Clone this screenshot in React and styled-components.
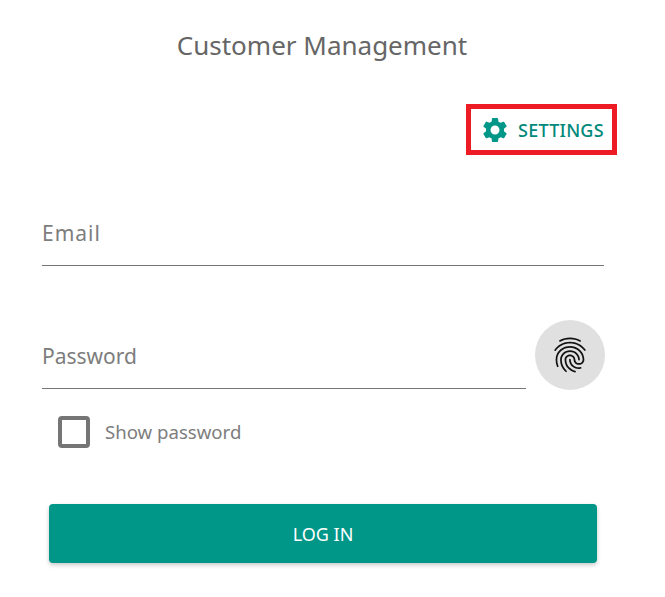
import React from 'react';
import styled, { createGlobalStyle } from 'styled-components';

const GlobalStyle = createGlobalStyle`
    html, body {
        margin:0;
        padding:0;
        background:#fff;
        font-family:"Noto Sans", "Open Sans", sans-serif;
    }
`;

const gearPath = 'M19.14 12.94c.04-.3.06-.61.06-.94 0-.32-.02-.64-.07-.94l2.03-1.58c.18-.14.23-.41.12-.61l-1.92-3.32c-.12-.22-.37-.29-.59-.22l-2.39.96c-.5-.38-1.03-.7-1.62-.94l-.36-2.54c-.04-.24-.24-.41-.48-.41h-3.84c-.24 0-.43.17-.47.41l-.36 2.54c-.59.24-1.13.57-1.62.94l-2.39-.96c-.22-.08-.47 0-.59.22L2.74 8.87c-.12.21-.08.47.12.61l2.03 1.58c-.05.3-.09.63-.09.94s.02.64.07.94l-2.03 1.58c-.18.14-.23.41-.12.61l1.92 3.32c.12.22.37.29.59.22l2.39-.96c.5.38 1.03.7 1.62.94l.36 2.54c.05.24.24.41.48.41h3.84c.24 0 .44-.17.47-.41l.36-2.54c.59-.24 1.13-.56 1.62-.94l2.39.96c.22.08.47 0 .59-.22l1.92-3.32c.12-.22.07-.47-.12-.61l-2.01-1.58zM12 15.6c-1.98 0-3.6-1.62-3.6-3.6s1.62-3.6 3.6-3.6 3.6 1.62 3.6 3.6-1.62 3.6-3.6 3.6z';

const fingerprintPath = 'M17.81 4.47c-.08 0-.16-.02-.23-.06C15.66 3.42 14 3 12.01 3c-1.98 0-3.86.47-5.57 1.41-.24.13-.54.04-.68-.2-.13-.24-.04-.55.2-.68C7.82 2.52 9.86 2 12.01 2c2.13 0 3.99.47 6.03 1.52.25.13.34.43.21.67-.09.18-.26.28-.44.28zM3.5 9.72c-.1 0-.2-.03-.29-.09-.23-.16-.28-.47-.12-.7.99-1.4 2.25-2.5 3.75-3.27C9.98 4.04 14 4.03 17.15 5.65c1.5.77 2.76 1.86 3.75 3.25.16.22.11.54-.12.7-.23.16-.54.11-.7-.12-.9-1.26-2.04-2.25-3.39-2.94-2.87-1.47-6.54-1.47-9.4.01-1.36.7-2.5 1.7-3.4 2.96-.08.14-.23.21-.39.21zm6.25 12.07c-.13 0-.26-.05-.35-.15-.87-.87-1.34-1.43-2.01-2.64-.69-1.23-1.05-2.73-1.05-4.34 0-2.97 2.54-5.39 5.66-5.39s5.66 2.42 5.66 5.39c0 .28-.22.5-.5.5s-.5-.22-.5-.5c0-2.42-2.09-4.39-4.66-4.39-2.57 0-4.66 1.97-4.66 4.39 0 1.44.32 2.77.93 3.85.64 1.15 1.08 1.64 1.85 2.42.19.2.19.51 0 .71-.11.1-.24.15-.37.15zm7.17-1.85c-1.19 0-2.24-.3-3.1-.89-1.49-1.01-2.38-2.65-2.38-4.39 0-.28.22-.5.5-.5s.5.22.5.5c0 1.41.72 2.74 1.94 3.56.71.48 1.54.71 2.54.71.24 0 .64-.03 1.04-.1.27-.05.53.13.58.41.05.27-.13.53-.41.58-.57.11-1.07.12-1.21.12zM14.91 22c-.04 0-.09-.01-.13-.02-1.59-.44-2.63-1.03-3.72-2.1-1.4-1.39-2.17-3.24-2.17-5.22 0-1.62 1.38-2.94 3.08-2.94 1.7 0 3.08 1.32 3.08 2.94 0 1.07.93 1.94 2.08 1.94s2.08-.87 2.08-1.94c0-3.77-3.25-6.83-7.25-6.83-2.84 0-5.44 1.58-6.61 4.03-.39.81-.59 1.76-.59 2.8 0 .78.07 2.01.67 3.61.1.26-.03.55-.29.64-.26.1-.55-.04-.64-.29-.49-1.31-.73-2.61-.73-3.96 0-1.2.23-2.29.68-3.24 1.33-2.79 4.28-4.6 7.51-4.6 4.55 0 8.25 3.51 8.25 7.83 0 1.62-1.38 2.94-3.08 2.94s-3.08-1.32-3.08-2.94c0-1.07-.93-1.94-2.08-1.94s-2.08.87-2.08 1.94c0 1.71.66 3.31 1.87 4.51.95.94 1.86 1.46 3.27 1.85.27.07.42.35.35.61-.05.23-.26.38-.47.38z';

function App() {
    return (
        <Page>
            <GlobalStyle />
            <Title>Customer Management</Title>
            <SettingsRow>
                <SettingsButton>
                    <svg width="30" height="30" viewBox="0 0 24 24" fill="#009688">
                        <path d={gearPath} />
                    </svg>
                    <SettingsText>SETTINGS</SettingsText>
                </SettingsButton>
            </SettingsRow>
            <EmailField>
                <FieldLabel $tracking="1px">Email</FieldLabel>
            </EmailField>
            <PasswordRow>
                <PasswordField>
                    <FieldLabel>Password</FieldLabel>
                </PasswordField>
                <FingerprintButton>
                    <svg width="42" height="42" viewBox="0 0 24 24" fill="#111">
                        <path d={fingerprintPath} />
                    </svg>
                </FingerprintButton>
            </PasswordRow>
            <CheckRow>
                <CheckBox />
                <CheckLabel>Show password</CheckLabel>
            </CheckRow>
            <LoginButton>LOG IN</LoginButton>
        </Page>
    );
}

export default App;

const Page = styled.div`
    width:665px;
    height:597px;
    box-sizing:border-box;
    padding:24px 61px 0 42px;
    overflow:hidden;
    background:#fff;
`;
const Title = styled.h1`
    margin:0;
    height:42px;
    line-height:42px;
    font-size:26px;
    font-weight:400;
    text-align:center;
    color:#666;
    padding-right:2px;
`;
const SettingsRow = styled.div`
    display:flex;
    justify-content:flex-end;
    margin-top:38px;
    margin-right:-13px;
`;
const SettingsButton = styled.div`
    width:151px;
    height:51px;
    box-sizing:border-box;
    border:5px solid #ed1c24;
    display:flex;
    align-items:center;
    padding-left:9px;
    gap:8px;
    color:#00897b;
    font-size:18px;
    font-weight:500;
    letter-spacing:0.25px;
    white-space:nowrap;
`;
const SettingsText = styled.span`
    padding-top:1px;
`;
const EmailField = styled.div`
    height:111px;
    border-bottom:1px solid #757575;
    display:flex;
    align-items:flex-end;
    padding-bottom:17px;
    box-sizing:border-box;
`;
const FieldLabel = styled.span`
    font-size:21px;
    font-weight:400;
    line-height:30px;
    color:#7d7d7d;
    letter-spacing:${props => props.$tracking || '0'};
`;
const PasswordRow = styled.div`
    display:flex;
    align-items:flex-start;
    margin-top:54px;
    margin-right:-1px;
    justify-content:space-between;
`;
const PasswordField = styled.div`
    width:484px;
    height:69px;
    box-sizing:border-box;
    border-bottom:1px solid #757575;
    display:flex;
    align-items:flex-end;
    padding-bottom:17px;
`;
const FingerprintButton = styled.div`
    width:70px;
    height:70px;
    border-radius:50%;
    background:#e0e0e0;
    display:flex;
    align-items:center;
    justify-content:center;
`;
const CheckRow = styled.div`
    display:flex;
    align-items:center;
    gap:15px;
    margin-top:26px;
    margin-left:16px;
`;
const CheckBox = styled.div`
    width:32px;
    height:32px;
    box-sizing:border-box;
    border:4px solid #757575;
    border-radius:4px;
`;
const CheckLabel = styled.span`
    font-size:18.6px;
    font-weight:400;
    color:#7d7d7d;
    padding-bottom:2px;
`;
const LoginButton = styled.div`
    width:548px;
    height:59px;
    box-sizing:border-box;
    padding-top:1px;
    margin-top:56px;
    margin-left:7px;
    background:#009688;
    border-radius:4px;
    box-shadow:0 2px 4px rgba(0,0,0,0.22);
    color:#fff;
    font-size:18px;
    font-weight:400;
    display:flex;
    align-items:center;
    justify-content:center;
`;
